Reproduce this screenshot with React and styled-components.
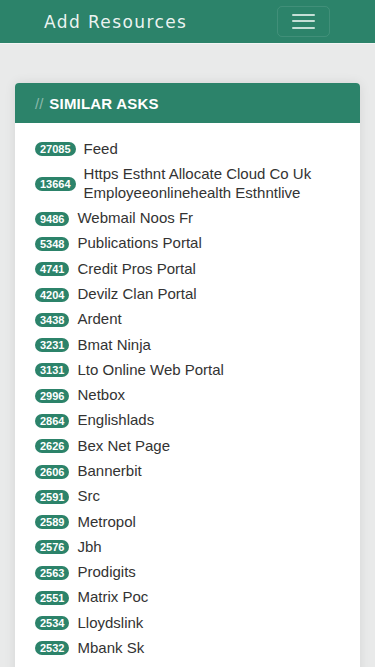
import React from "react";
import styled, { createGlobalStyle } from "styled-components";

const GREEN = "#2c836a";

const Global = createGlobalStyle`
  html, body { margin: 0; padding: 0; }
  body {
    background: #e9eaea;
    font-family: "Liberation Sans", Arial, Helvetica, sans-serif;
    color: #333;
  }
`;

const Navbar = styled.header`
  height: 43px;
  background: ${GREEN};
  border-bottom: 1px solid #f3f5f4;
  display: flex;
  align-items: center;
  justify-content: space-between;
  padding: 0 45px 0 44px;
`;

const Brand = styled.div`
  font-family: "DejaVu Sans", "Open Sans", sans-serif;
  font-size: 17px;
  letter-spacing: 1.4px;
  font-weight: 400;
  color: rgba(255, 255, 255, 0.92);
  line-height: 1;
  margin-top: 1px;
`;

const Toggle = styled.button`
  width: 53px;
  height: 31px;
  border: 1px solid rgba(255, 255, 255, 0.1);
  border-radius: 5px;
  background: transparent;
  display: flex;
  flex-direction: column;
  align-items: center;
  justify-content: center;
  gap: 4.5px;
  padding: 0;
  margin-top: -1px;
`;

const Bar = styled.span`
  display: block;
  width: 23px;
  height: 2px;
  border-radius: 1px;
  background: rgba(225, 240, 234, 0.85);
`;

const Main = styled.main`
  padding: 39px 15px 0;
`;

const Card = styled.section`
  background: #fff;
  border-radius: 4px;
  box-shadow: 0 0 12px rgba(0, 0, 0, 0.09);
  overflow: hidden;
`;

const CardHeader = styled.h2`
  margin: 0;
  height: 40px;
  background: ${GREEN};
  display: flex;
  align-items: center;
  padding: 0 20px;
  font-size: 15px;
  font-weight: 700;
  letter-spacing: 0.2px;
  color: #fff;
  text-transform: uppercase;
`;

const Slashes = styled.span`
  color: rgba(255, 255, 255, 0.45);
  font-weight: 400;
  margin-right: 6px;
  letter-spacing: 0;
`;

const List = styled.ul`
  list-style: none;
  margin: 0;
  padding: 12.5px 20px 20px;
`;

const Item = styled.li`
  display: flex;
  align-items: center;
  padding: 3.15px 0;
`;

const Badge = styled.span`
  flex: none;
  background: ${GREEN};
  color: #fff;
  font-size: 11px;
  font-weight: 700;
  line-height: 12px;
  padding: 1px 5px 1px;
  border-radius: 7px;
  margin-top: 2px;
`;

const Label = styled.a`
  margin-left: 8px;
  font-size: 15px;
  line-height: 19px;
  color: #333;
  text-decoration: none;
`;

const items = [
  [27085, "Feed"],
  [13664, "Https Esthnt Allocate Cloud Co Uk Employeeonlinehealth Esthntlive"],
  [9486, "Webmail Noos Fr"],
  [5348, "Publications Portal"],
  [4741, "Credit Pros Portal"],
  [4204, "Devilz Clan Portal"],
  [3438, "Ardent"],
  [3231, "Bmat Ninja"],
  [3131, "Lto Online Web Portal"],
  [2996, "Netbox"],
  [2864, "Englishlads"],
  [2626, "Bex Net Page"],
  [2606, "Bannerbit"],
  [2591, "Src"],
  [2589, "Metropol"],
  [2576, "Jbh"],
  [2563, "Prodigits"],
  [2551, "Matrix Poc"],
  [2534, "Lloydslink"],
  [2532, "Mbank Sk"],
];

export default function App() {
  return (
    <>
      <Global />
      <Navbar>
        <Brand>Add Resources</Brand>
        <Toggle aria-label="menu">
          <Bar />
          <Bar />
          <Bar />
        </Toggle>
      </Navbar>
      <Main>
        <Card>
          <CardHeader>
            <Slashes>//</Slashes>Similar Asks
          </CardHeader>
          <List>
            {items.map(([n, t]) => (
              <Item key={t}>
                <Badge>{n}</Badge>
                <Label href="#">{t}</Label>
              </Item>
            ))}
          </List>
        </Card>
      </Main>
    </>
  );
}
